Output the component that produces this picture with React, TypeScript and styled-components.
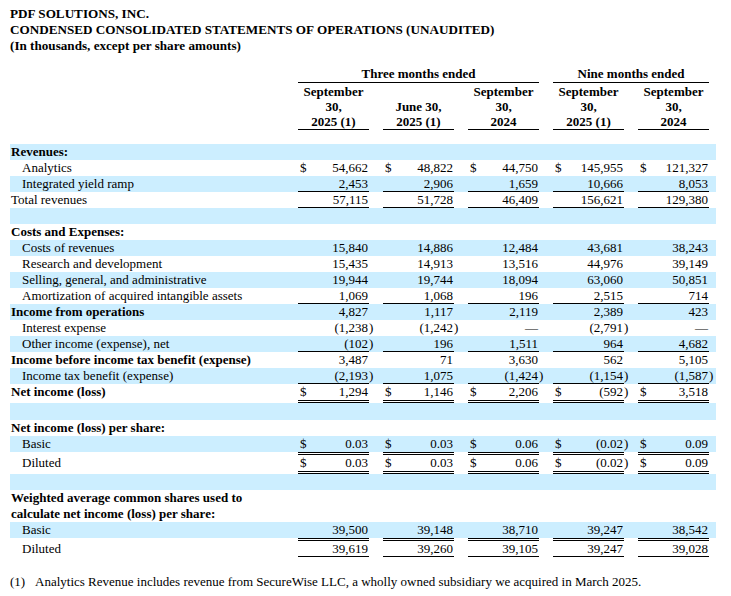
import React from "react";
import styled, { createGlobalStyle } from "styled-components";

type Line = "single" | "double";

interface RowData {
  label?: React.ReactNode;
  bold?: boolean;
  indent?: boolean;
  blue?: boolean;
  dollar?: boolean;
  values?: string[];
  top?: Line;
  bottom?: Line;
  blank?: number;
}

const BLUE = "#cceeff";

const heads = [
  ["September", "30,", "2025 (1)"],
  ["June 30,", "2025 (1)"],
  ["September", "30,", "2024"],
  ["September", "30,", "2025 (1)"],
  ["September", "30,", "2024"],
];

const rows: RowData[] = [
  { label: "Revenues:", bold: true, blue: true },
  { label: "Analytics", indent: true, dollar: true, values: ["54,662", "48,822", "44,750", "145,955", "121,327"] },
  { label: "Integrated yield ramp", indent: true, blue: true, bottom: "single", values: ["2,453", "2,906", "1,659", "10,666", "8,053"] },
  { label: "Total revenues", bottom: "single", values: ["57,115", "51,728", "46,409", "156,621", "129,380"] },
  { blank: 16, blue: true },
  { label: "Costs and Expenses:", bold: true },
  { label: "Costs of revenues", indent: true, blue: true, values: ["15,840", "14,886", "12,484", "43,681", "38,243"] },
  { label: "Research and development", indent: true, values: ["15,435", "14,913", "13,516", "44,976", "39,149"] },
  { label: "Selling, general, and administrative", indent: true, blue: true, values: ["19,944", "19,744", "18,094", "63,060", "50,851"] },
  { label: "Amortization of acquired intangible assets", indent: true, bottom: "single", values: ["1,069", "1,068", "196", "2,515", "714"] },
  { label: "Income from operations", bold: true, blue: true, values: ["4,827", "1,117", "2,119", "2,389", "423"] },
  { label: "Interest expense", indent: true, values: ["(1,238)", "(1,242)", "—", "(2,791)", "—"] },
  { label: "Other income (expense), net", indent: true, blue: true, bottom: "single", values: ["(102)", "196", "1,511", "964", "4,682"] },
  { label: "Income before income tax benefit (expense)", bold: true, values: ["3,487", "71", "3,630", "562", "5,105"] },
  { label: "Income tax benefit (expense)", indent: true, blue: true, bottom: "single", values: ["(2,193)", "1,075", "(1,424)", "(1,154)", "(1,587)"] },
  { label: "Net income (loss)", bold: true, dollar: true, bottom: "double", values: ["1,294", "1,146", "2,206", "(592)", "3,518"] },
  { blank: 17, blue: true },
  { label: "Net income (loss) per share:", bold: true },
  { label: "Basic", indent: true, blue: true, dollar: true, values: ["0.03", "0.03", "0.06", "(0.02)", "0.09"] },
  { label: "Diluted", indent: true, dollar: true, top: "double", bottom: "double", values: ["0.03", "0.03", "0.06", "(0.02)", "0.09"] },
  { blank: 16, blue: true },
  {
    label: (
      <>
        Weighted average common shares used to
        <br />
        calculate net income (loss) per share:
      </>
    ),
    bold: true,
  },
  { label: "Basic", indent: true, blue: true, values: ["39,500", "39,148", "38,710", "39,247", "38,542"] },
  { label: "Diluted", indent: true, top: "double", bottom: "single", values: ["39,619", "39,260", "39,105", "39,247", "39,028"] },
];

const GlobalStyle = createGlobalStyle`
  body {
    margin: 0;
    background: #fff;
    color: #000;
    font-family: "Liberation Serif", "Times New Roman", serif;
  }
`;

const Page = styled.div`
  padding: 6px 10px;
  font-size: 13px;
`;

const Title = styled.div`
  font-weight: bold;
  font-size: 13.15px;
  line-height: 16px;
  margin-bottom: 12px;
`;

const Table = styled.table`
  border-collapse: separate;
  border-spacing: 0;
  table-layout: fixed;
  width: 706px;
  font-size: 13px;

  td {
    padding: 0;
    vertical-align: top;
    white-space: nowrap;
  }
`;

const Col = styled.col<{ $w: number }>`
  width: ${(p) => p.$w}px;
`;

const Row = styled.tr<{ $blue?: boolean }>`
  background: ${(p) => (p.$blue ? BLUE : "transparent")};
`;

const BlankCell = styled.td<{ $h: number }>`
  height: ${(p) => p.$h}px;
`;

const GroupHead = styled.td`
  font-weight: bold;
  text-align: center;
  line-height: 16px;
  border-bottom: 1px solid #000;
`;

const ColHead = styled.td`
  font-weight: bold;
  text-align: center;
  line-height: 15px;
  padding: 1px 0 0 !important;
  vertical-align: bottom !important;
  border-bottom: 1px solid #000;
`;

const pad = (l?: Line) => (l === "double" ? 3 : 0);
const border = (l?: Line) =>
  l === "double" ? "3px double #000" : l === "single" ? "1px solid #000" : "none";
const thin = (l?: Line) => (l === "single" ? 1 : 0);

const LabelCell = styled.td<{ $bold?: boolean; $indent?: boolean; $top?: Line; $bottom?: Line }>`
  font-weight: ${(p) => (p.$bold ? "bold" : "normal")};
  line-height: 16px;
  padding: ${(p) => `${pad(p.$top)}px 0 ${pad(p.$bottom)}px ${p.$indent ? 12 : 1}px`} !important;
`;

const FigureCell = styled.td<{ $top?: Line; $bottom?: Line; $align: "left" | "right" }>`
  text-align: ${(p) => p.$align};
  line-height: ${(p) => 16 - thin(p.$top) - thin(p.$bottom)}px;
  border-top: ${(p) => border(p.$top)};
  border-bottom: ${(p) => border(p.$bottom)};
  padding: ${(p) => (p.$align === "left" ? "0 0 0 2px" : "0 1px 0 0")} !important;
`;

const ParenCell = styled.td<{ $top?: Line; $bottom?: Line }>`
  line-height: 16px;
  padding: ${(p) => `${pad(p.$top)}px 0 ${pad(p.$bottom)}px 0`} !important;
`;

const Footnote = styled.div`
  display: flex;
  margin-top: 17px;
  line-height: 16px;
`;

const FootMark = styled.span`
  width: 25px;
  flex: none;
`;

const colWidths = [288, 12, 59, 14, 12, 59, 14, 12, 59, 14, 12, 59, 14, 12, 59, 7];

const DataRow = ({ row }: { row: RowData }) => {
  if (row.blank) {
    return (
      <Row $blue={row.blue}>
        <BlankCell $h={row.blank} colSpan={16} />
      </Row>
    );
  }
  return (
    <Row $blue={row.blue}>
      <LabelCell $bold={row.bold} $indent={row.indent} $top={row.top} $bottom={row.bottom}>
        {row.label}
      </LabelCell>
      {[0, 1, 2, 3, 4].map((i) => {
        const v = row.values?.[i];
        const neg = v?.startsWith("(");
        const text = neg ? v!.slice(0, -1) : v;
        return (
          <React.Fragment key={i}>
            <FigureCell $align="left" $top={row.values && row.top} $bottom={row.values && row.bottom}>
              {row.dollar ? "$" : ""}
            </FigureCell>
            <FigureCell $align="right" $top={row.values && row.top} $bottom={row.values && row.bottom}>
              {text}
            </FigureCell>
            <ParenCell $top={row.top} $bottom={row.bottom}>{neg ? ")" : ""}</ParenCell>
          </React.Fragment>
        );
      })}
    </Row>
  );
};

const App = () => {
  return (
    <Page>
      <GlobalStyle />
      <Title>
        PDF SOLUTIONS, INC.
        <br />
        CONDENSED CONSOLIDATED STATEMENTS OF OPERATIONS (UNAUDITED)
        <br />
        (In thousands, except per share amounts)
      </Title>
      <Table>
        <colgroup>
          {colWidths.map((w, i) => (
            <Col key={i} $w={w} />
          ))}
        </colgroup>
        <tbody>
          <tr>
            <td />
            <GroupHead colSpan={8}>Three months ended</GroupHead>
            <td />
            <GroupHead colSpan={5}>Nine months ended</GroupHead>
            <td />
          </tr>
          <tr>
            <td />
            {heads.map((h, i) => (
              <React.Fragment key={i}>
                <ColHead colSpan={2}>
                  {h.map((line, j) => (
                    <React.Fragment key={j}>
                      {j > 0 && <br />}
                      {line}
                    </React.Fragment>
                  ))}
                </ColHead>
                <td />
              </React.Fragment>
            ))}
          </tr>
          <Row>
            <BlankCell $h={14} colSpan={16} />
          </Row>
          {rows.map((r, i) => (
            <DataRow key={i} row={r} />
          ))}
        </tbody>
      </Table>
      <Footnote>
        <FootMark>(1)</FootMark>
        <span>Analytics Revenue includes revenue from SecureWise LLC, a wholly owned subsidiary we acquired in March 2025.</span>
      </Footnote>
    </Page>
  );
};

export default App;
